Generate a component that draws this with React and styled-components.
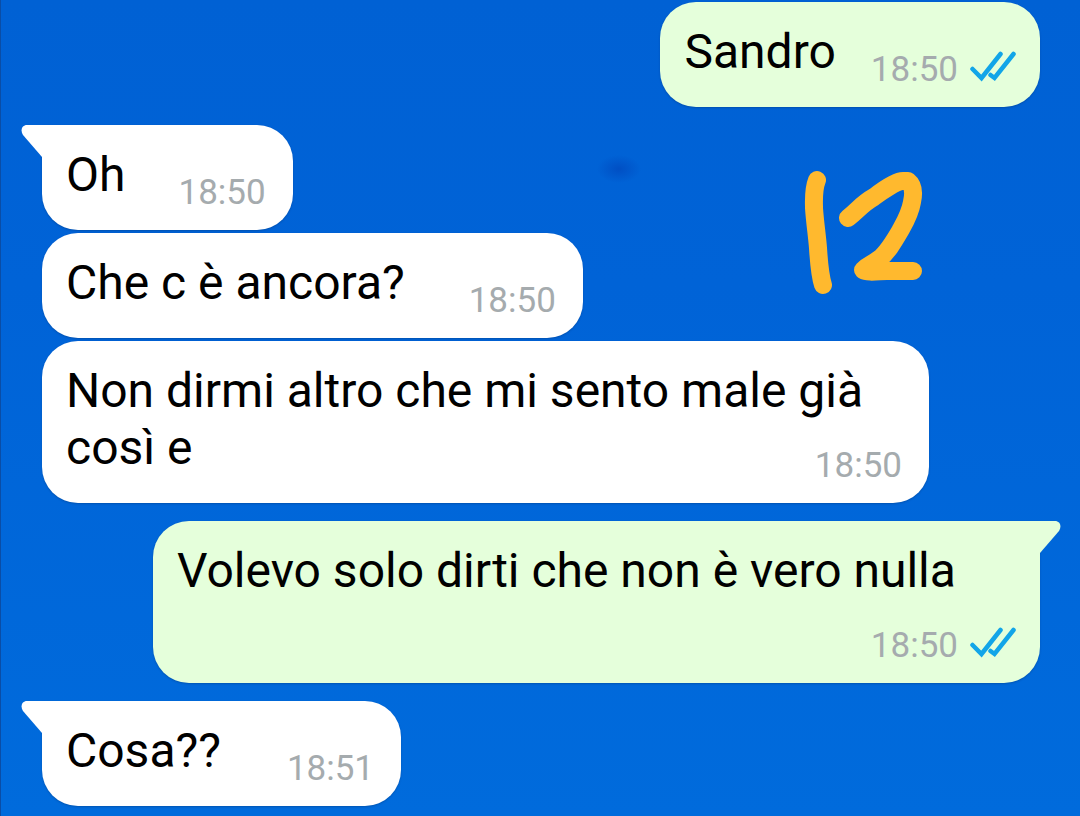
import React from "react";
import styled, { createGlobalStyle, css } from "styled-components";

const GlobalStyle = createGlobalStyle`
  * {
    box-sizing: border-box;
  }

  body {
    margin: 0;
    font-family: Roboto, "Noto Sans", sans-serif;
  }
`;

const Chat = styled.main`
  position: relative;
  min-height: 100vh;
  padding: 2px 40px 10px 41px;
  border-left: 1px solid #0a4da6;
  background:
    radial-gradient(ellipse 22px 14px at 618px 169px, rgba(0, 66, 184, 0.6), transparent),
    linear-gradient(#0061d4, #0063d7 35%, #006bdc);
  overflow: hidden;
`;

const MessageList = styled.ol`
  display: flex;
  flex-direction: column;
  gap: 18px;
  margin: 0;
  padding: 0;
  list-style: none;
`;

const Group = styled.li`
  display: flex;
  flex-direction: column;
  align-items: ${(p) => (p.$out ? "flex-end" : "flex-start")};
  gap: 3px;
`;

const Bubble = styled.article`
  position: relative;
  display: flow-root;
  max-width: calc(100% - 111px);
  padding: 21px ${(p) => (p.$out ? 24 : 27)}px 17px 24px;
  border-radius: 36px;
  background: ${(p) => (p.$out ? "#e5ffdb" : "#ffffff")};
  box-shadow: 0 1px 2px rgba(0, 40, 90, 0.3);

  ${(p) =>
    p.$tail &&
    (p.$out
      ? css`
          border-top-right-radius: 0;
        `
      : css`
          border-top-left-radius: 0;
        `)}
`;

const TailIcon = styled.svg`
  position: absolute;
  top: 0;
  width: 22px;
  height: 34px;
  fill: ${(p) => (p.$out ? "#e5ffdb" : "#ffffff")};
  ${(p) => (p.$out ? "left: calc(100% - 1px); transform: scaleX(-1);" : "right: calc(100% - 1px);")}
`;

const Text = styled.span`
  color: #000;
  font-size: 48px;
  line-height: 57px;
`;

// floats beside the last line, or drops below it when there is no room
const Meta = styled.span`
  float: right;
  display: flex;
  align-items: center;
  gap: 12px;
  padding-top: 27px;
  margin-left: ${(p) => p.$gap}px;
  color: #a5abae;
  font-size: 35px;
  line-height: 40px;
`;

const CheckIcon = styled.svg`
  width: 46px;
  height: 32px;
  margin-bottom: 8px;
  fill: none;
  stroke: #12a5e8;
  stroke-width: 4.5;
  stroke-linecap: round;
`;

const Doodle = styled.svg`
  position: absolute;
  top: 166px;
  right: 152px;
  width: 126px;
  height: 132px;
  fill: none;
  stroke: #ffb92e;
  stroke-width: 18;
  stroke-linecap: round;
  stroke-linejoin: round;
`;

const Tail = ({ out }) => (
  <TailIcon $out={out} viewBox="0 0 22 34" aria-hidden="true">
    <path d="M22 0H6C1 0-1 5 2 10L21 32H22Z" />
  </TailIcon>
);

const Checks = () => (
  <CheckIcon viewBox="0 0 46 32" role="img" aria-label="Letto">
    <path d="M2.500 19L11.500 28L30.500 4" />
    <path d="M20.500 25L24.500 28L43.500 4" />
  </CheckIcon>
);

const groups = [
  { out: true, messages: [{ text: "Sandro", time: "18:50", gap: 35 }] },
  {
    tail: true,
    messages: [
      { text: "Oh", time: "18:50", gap: 53 },
      { text: "Che c è ancora?", time: "18:50", gap: 64 },
      { text: "Non dirmi altro che mi sento male già così e", time: "18:50", gap: 35 },
    ],
  },
  {
    out: true,
    tail: true,
    messages: [{ text: "Volevo solo dirti che non è vero nulla", time: "18:50", gap: 35 }],
  },
  { tail: true, messages: [{ text: "Cosa??", time: "18:51", gap: 66 }] },
];

const Message = ({ message, out, tail }) => (
  <Bubble $out={out} $tail={tail}>
    {tail && <Tail out={out} />}
    <Text>{message.text}</Text>
    <Meta $gap={message.gap}>
      <time>{message.time}</time>
      {out && <Checks />}
    </Meta>
  </Bubble>
);

const App = () => {
  return (
    <>
      <GlobalStyle />
      <Chat>
        <MessageList>
          {groups.map((group, g) => (
            <Group key={g} $out={group.out}>
              {group.messages.map((message, i) => (
                <Message key={i} message={message} out={group.out} tail={group.tail && i === 0} />
              ))}
            </Group>
          ))}
        </MessageList>
        <Doodle viewBox="802 166 126 132" aria-hidden="true">
          <path d="M817 180C813 190 814 202 814 208C815 223 817 235 818 248C819 264 820 276 823 285" />
          <path d="M848 218C858 210 863 203 874 197C883 190 897 181 903 181H908C913 185 914 193 912 202C910 214 905 222 900 231C893 243 887 253 879 259C873 264 868 265 863 270C868 273 879 271 887 271H913" />
        </Doodle>
      </Chat>
    </>
  );
};

export default App;
